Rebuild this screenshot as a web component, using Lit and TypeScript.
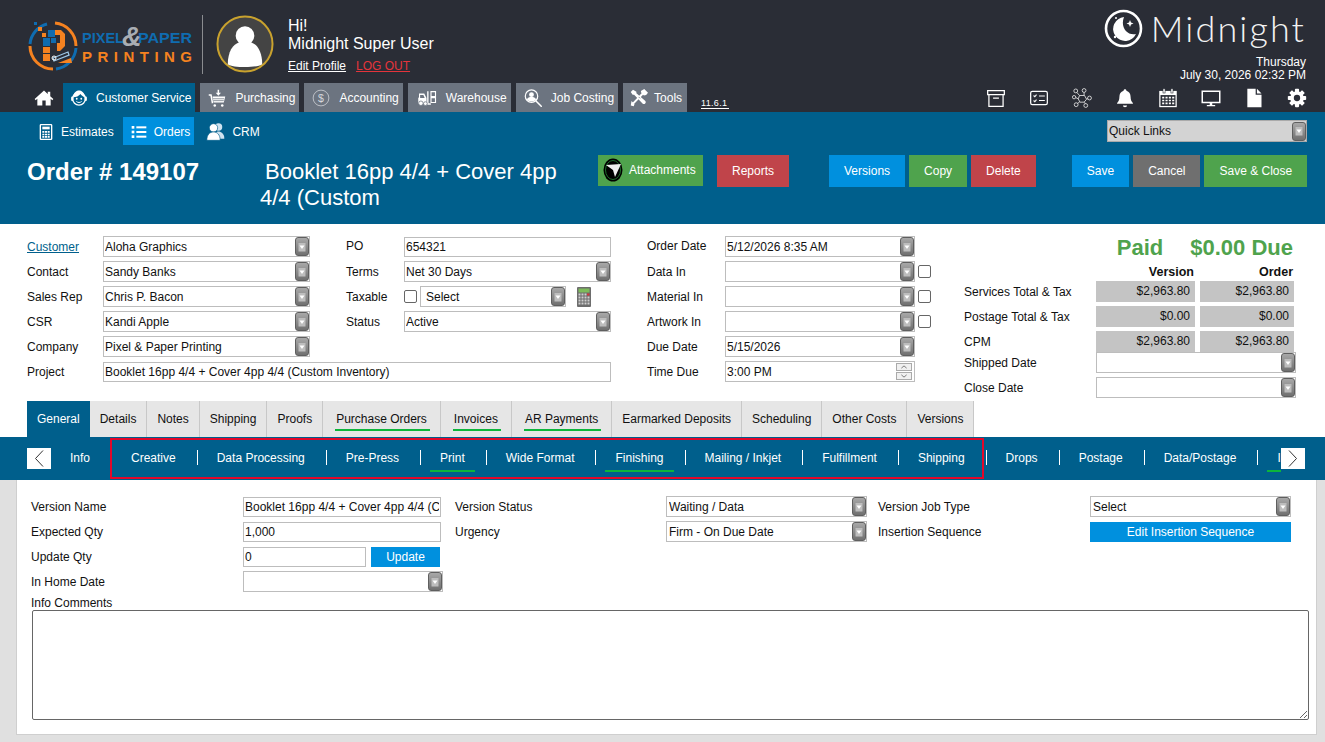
import { LitElement, html, css, svg } from "lit";
import { customElement } from "lit/decorators.js";

const I = {
  home: svg`<path fill="#fff" d="M12 3 .8 13.2l1.2 1.4L4 13v8h6v-6h4v6h6v-8l2 1.6 1.2-1.4L19.5 10V4.500h-3V7.200z"/>`,
  cs: svg`<circle cx="12" cy="13" r="8.500" fill="none" stroke="#fff" stroke-width="1.800"/><path fill="#fff" d="M4 11C5 4 9 2 12 2s7 2 8 9c-3-1-5-3-6-4.500C12 9 8 11 4 11z"/><rect x="1.500" y="10" width="3" height="6" rx="1.500" fill="#fff"/><rect x="19.500" y="10" width="3" height="6" rx="1.500" fill="#fff"/><circle cx="9" cy="13" r="1.200" fill="#fff"/><circle cx="15" cy="13" r="1.200" fill="#fff"/><path d="M8.500 16.500c2 2 5 2 7 0" stroke="#fff" stroke-width="1.300" fill="none"/>`,
  cart: svg`<path fill="none" stroke="#fff" stroke-width="2" d="M1 8h3l2 11"/><path fill="#fff" d="M6 10h17l-2 8H7.500z"/><path stroke="#6c7480" stroke-width="1" d="M6.500 13h15M7 15.500h14"/><path fill="#fff" d="M12.800 1h2v4h2.500l-3.500 4-3.500-4h2.500z"/><circle cx="9" cy="22" r="1.700" fill="#fff"/><circle cx="19" cy="22" r="1.700" fill="#fff"/>`,
  dollar: svg`<circle cx="12" cy="12" r="10.500" fill="none" stroke="#d5d8dc" stroke-width="1"/><text x="12" y="17" text-anchor="middle" font-family="Liberation Sans, sans-serif" font-size="14" fill="#d5d8dc">$</text>`,
  fork: svg`<path fill="#fff" d="M1 12l1-1V6h7l3 6v7H1z"/><path fill="#6c7480" d="M3.500 8h4.300l1.800 4H3.500z"/><path fill="none" stroke="#fff" stroke-width="1.800" d="M13.800 3v17h4"/><circle cx="4.500" cy="19" r="3" fill="#fff" stroke="#6c7480"/><circle cx="10.500" cy="19.500" r="2.500" fill="#fff" stroke="#6c7480"/><path fill="none" stroke="#fff" stroke-width="1.500" d="M18 3.500h6v6.500h-6zM18 11.500h6v6.500h-6z"/>`,
  job: svg`<circle cx="10" cy="9.500" r="8.300" fill="none" stroke="#fff" stroke-width="1.600"/><circle cx="10" cy="7.500" r="3.200" fill="#fff"/><path fill="#fff" d="M3.800 14c1-3 3.500-3.500 6.200-3.500s5.200.5 6.200 3.500c-3 3.500-9.400 3.500-12.400 0z"/><path stroke="#fff" stroke-width="2" stroke-linecap="round" d="M16 16l7 7"/>`,
  tools: svg`<path fill="#fff" d="M4 1 1 4l2.500 3.500 2 .2L17 19.500a2.500 2.500 0 0 0 3.500-3.500L8.500 5.500V3.500z"/><path fill="none" stroke="#fff" stroke-width="2.800" stroke-linecap="round" d="M19 4 5 18.500"/><path fill="#fff" d="M14.500 2.500 19 0l5 5-2.500 3-3 .5-3.500-3.500zM2 16l4 4 -1 3-4-1z"/><path stroke="#6c7480" stroke-width="1" d="M11.500 10.500l2 2"/>`,
  archive: svg`<path fill="none" stroke="#fff" stroke-width="1.500" d="M2 3h20v5H2zM3.500 8v14h17V8M8.500 12h7"/>`,
  check: svg`<rect x="2" y="4" width="20" height="16" rx="2" fill="none" stroke="#fff" stroke-width="1.500"/><path fill="none" stroke="#fff" stroke-width="1.300" d="M5.500 9l1.500 1.500L9 8M5.500 15l1.500 1.500L9 14M12 9.500h7M12 15h7"/>`,
  net: svg`<g fill="none" stroke="#e8e8e8" stroke-width="1"><path d="M9 9h6l2.500 4.500L14.500 17h-5l-2-4z"/><circle cx="4.500" cy="3.500" r="2.300"/><circle cx="14.500" cy="3" r="2.300"/><circle cx="21" cy="12" r="2.300"/><circle cx="16.500" cy="21" r="2.300"/><circle cx="5" cy="20" r="2.300"/><circle cx="2.500" cy="11" r="2"/><path d="M6 5.500 9 9M14.500 5.300 14.500 9M17.500 13h1.500M15 17l1 2M9 17l-2.500 1.500M4.500 11.500l3 1.500"/></g>`,
  bell: svg`<path fill="#fff" d="M12 1.500c1 0 1.700.7 1.700 1.700 3.500 1 5 3.800 5 7.300 0 4 1.300 6 2.800 7.500v1H2.500v-1C4 16.500 5.300 14.500 5.300 10.500c0-3.500 1.500-6.300 5-7.300C10.300 2.200 11 1.500 12 1.500zM9.500 21h5a2.500 2 0 0 1-5 0z"/>`,
  cal: svg`<rect x="1.500" y="3.500" width="21" height="19.500" fill="#fff"/><rect x="3" y="8.500" width="18" height="13" fill="#2a2d36"/><rect x="6" y="1" width="2.500" height="5" fill="#fff" stroke="#2a2d36" stroke-width=".7"/><rect x="15.500" y="1" width="2.500" height="5" fill="#fff" stroke="#2a2d36" stroke-width=".7"/><g fill="#fff"><path d="M5 10.500h2.500v2H5zM9 10.500h2.500v2H9zM13 10.500h2.500v2H13zM17 10.500h2.500v2H17zM5 14h2.500v2H5zM9 14h2.500v2H9zM13 14h2.500v2H13zM17 14h2.500v2H17zM5 17.500h2.500v2H5zM9 17.500h2.500v2H9zM13 17.500h2.500v2H13zM17 17.500h2.500v2H17z"/></g>`,
  mon: svg`<path fill="none" stroke="#fff" stroke-width="1.800" d="M1.500 4h21v13.500h-21z"/><path fill="#fff" d="M10.500 17.500h3v3h3.500v1.500H7v-1.500h3.500z"/>`,
  file: svg`<path fill="#fff" d="M4 1h10v7h7v15H4zM15.500 1 21 6.500h-5.500z"/>`,
  gear: svg`<g fill="#fff"><circle cx="12" cy="12" r="8.200"/><rect x="9.500" y="1" width="5" height="22" rx="1"/><rect x="9.500" y="1" width="5" height="22" rx="1" transform="rotate(45 12 12)"/><rect x="9.500" y="1" width="5" height="22" rx="1" transform="rotate(90 12 12)"/><rect x="9.500" y="1" width="5" height="22" rx="1" transform="rotate(135 12 12)"/></g><circle cx="12" cy="12" r="3.800" fill="#2a2d36"/>`,
  est: svg`<rect x="3.500" y="1" width="17" height="22" rx="1" fill="none" stroke="#fff" stroke-width="2"/><rect x="6.500" y="4" width="11" height="4" fill="#fff"/><g fill="#fff"><path d="M6.500 10.500h3v2.500h-3zM10.500 10.500h3v2.500h-3zM14.500 10.500h3v2.500h-3zM6.500 14.500h3v2.500h-3zM10.500 14.500h3v2.500h-3zM14.500 14.500h3v2.500h-3zM6.500 18h3v2.500h-3zM10.500 18h3v2.500h-3zM14.500 18h3v2.500h-3z"/></g>`,
  list: svg`<g fill="#fff"><rect x="1" y="3" width="4" height="4"/><rect x="1" y="10" width="4" height="4"/><rect x="1" y="17" width="4" height="4"/><rect x="8" y="3.500" width="15" height="3"/><rect x="8" y="10.500" width="15" height="3"/><rect x="8" y="17.500" width="15" height="3"/></g>`,
  crm: svg`<circle cx="15" cy="6" r="4.500" fill="#cfe3f0"/><path fill="#cfe3f0" d="M9 20c0-6 3-8.500 6-8.500s7 2.500 7 8.500z"/><circle cx="9" cy="7" r="5" fill="#fff" stroke="#005f8c" stroke-width=".8"/><path fill="#fff" stroke="#005f8c" stroke-width=".8" d="M1 22c0-7 3.500-10 8-10s8 3 8 10z"/>`,
};
const icon = (k: keyof typeof I, cls = "") => html`<svg class="ic ${cls}" viewBox="0 0 24 24" aria-hidden="true">${I[k]}</svg>`;
const arrow = html`<span class="arr"><svg viewBox="0 0 12 18" width="12" height="18"><rect x="2.500" y="5" width="7" height="8.500" fill="#bdbdbd"/><path d="M3.500 7.500h5L6 11z" fill="#fff"/></svg></span>`;
const sel = (t = "", cls = "") => html`<div class="fld sel ${cls}"><span class="v">${t}</span>${arrow}</div>`;
const inp = (v: string, cls = "") => html`<input class="fld in ${cls}" .value=${v} />`;
const cb = html`<input type="checkbox" class="cb" />`;

@customElement("app-root")
export class AppRoot extends LitElement {
  static styles = css`
    :host { display: flex; flex-direction: column; width: 100%; min-height: 100vh; font: 12px/14px "Liberation Sans", Arial, sans-serif; color: #111; background: #fff; overflow: hidden; }
    * { box-sizing: border-box; }
    .ic { display: block; flex: none; width: 18px; height: 18px; }
    a { color: inherit; }

    /* header */
    .hdr { background: #2a2d36; height: 112px; color: #fff; flex: none; }
    .top { display: flex; height: 83px; }
    .logo { display: block; width: 180px; height: 70px; margin: 10px 0 0 20px; flex: none; }
    .divider { width: 1px; height: 59px; background: #8a8c90; margin: 15px 0 0 2px; }
    .avatar { display: block; width: 58px; height: 58px; margin: 15px 0 0 13px; flex: none; }
    .hi { margin: 17px 0 0 14px; font-size: 16px; line-height: 18px; }
    .links { display: flex; gap: 10px; font-size: 12px; line-height: 14px; margin-top: 6px; }
    .links .lo { color: #e5343b; }
    .brand { margin-left: auto; padding: 9px 19px 0 0; display: flex; flex-direction: column; align-items: flex-end; }
    .mid { display: flex; align-items: center; gap: 8px; height: 38px; }
    .mid svg { width: 39px; height: 39px; display: block; }
    .mid span { font: 300 36px/38px Lato, "Open Sans", sans-serif; letter-spacing: 2.100px; color: #f2f2f2; }
    .date { text-align: right; line-height: 13px; margin-top: 9px; }
    .nav { display: flex; height: 29px; padding-left: 34px; align-items: stretch; }
    .home { width: 20px; height: 20px; margin: 5px 9px 0 0; }
    .tab { display: flex; align-items: center; gap: 9px; padding: 1px 4px 0 8px; margin-right: 5px; background: #6c7480; color: #fff; }
    .tab.on { background: #005f8c; gap: 8px; padding-left: 7px; }
    .tab .w { width: 21px; }
    .tab.n { gap: 6px; padding: 1px 5px 0 7px; }
    .ver { align-self: flex-end; font-size: 9px; line-height: 10px; margin: 0 0 3px 9px; border-bottom: 1px solid #fff; letter-spacing: .300px; padding-right: 2px; }
    .icons { margin-left: auto; display: flex; gap: 23px; align-items: center; padding: 0 18px 0 0; }
    .icons .ic { width: 20px; height: 20px; margin-top: 1px; }

    /* blue head */
    .blue { background: #005f8c; height: 112px; flex: none; color: #fff; }
    .sub { display: flex; height: 43px; padding: 5px 18px 0 36px; align-items: flex-start; }
    .sub-i { display: flex; align-items: center; gap: 7px; height: 28px; padding: 1px 0 0 2px; }
    .sub-i .ic { width: 16px; height: 16px; }
    .sub-i.on { background: #0090de; margin: 0 12px 0 9px; padding: 1px 4px 0 8px; }
    .sub-i.crm { gap: 6px; padding-left: 0; }
    .sub-i.crm .ic { width: 20px; height: 20px; }
    .titlerow { display: flex; padding-left: 27px; align-items: flex-start; }
    .ono { font-size: 24px; line-height: 34px; font-weight: 700; width: 233px; flex: none; }
    .bk { font-size: 22px; line-height: 26px; width: 310px; margin: 4px 28px 0 0; text-indent: 5px; flex: none; }
    .btn { display: flex; align-items: center; height: 32px; padding: 0 15px; color: #fff; border: 0; font: inherit; flex: none; }
    .g { background: #4fa34d; } .r { background: #c0444a; } .bl { background: #0090de; } .gr { background: #6f6f6f; }
    .att { height: 31px; padding: 0 0 2px 5px; gap: 6px; width: 105px; margin-right: 14px; }
    .att svg { width: 20px; height: 24px; display: block; }
    .m40 { margin-left: 40px; } .m36 { margin-left: 36px; } .ml4 { margin-left: 4px; }

    /* form */
    .form { display: flex; height: 177px; padding: 10px 0 0 27px; flex: none; }
    .grid { display: grid; grid-template-columns: 76px 207px 94px 207px 114px 190px 16px; grid-auto-rows: 25px; align-items: center; align-self: flex-start; }
    .lab2 { padding-left: 36px; }
    .lab3 { padding-left: 36px; }
    .up { margin-bottom: 2px; }
    .cust { color: #005f8c; text-decoration: underline; }
    .fld { display: flex; align-items: center; height: 21px; width: 100%; background: #fff; border: 1px solid #bdbdbd; font: inherit; color: #111; padding: 0 0 0 1px; border-radius: 0; outline: none; }
    .in { height: 20px; padding: 0 1px; }
    .sel .v { flex: 1; white-space: nowrap; overflow: hidden; }
    .sel.ql { margin: 3px 0 0 auto; width: 200px; height: 22px; background: #d3d3d3; border-color: #aaa; }
    .arr { flex: none; width: 14px; height: 19px; border: 1px solid #5f5f5f; border-radius: 3px; background: linear-gradient(#a8a8a8, #707070); display: flex; align-items: center; justify-content: center; }
    .cb { width: 13px; height: 13px; margin: 0 0 0 3px; appearance: none; background: #fff; border: 1px solid #666; border-radius: 2px; display: block; }
    .fld.span4 { grid-column: 2 / span 3; width: 508px; }
    .tax { display: flex; align-items: center; }
    .tax .cb { margin: 0 3px 0 0; }
    .tax .sel { width: 146px; padding-left: 5px; }
    .tax > svg { width: 16px; height: 20px; margin-left: 10px; display: block; flex: none; }
    .time { display: flex; align-items: center; height: 21px; border: 1px solid #bdbdbd; padding: 0 1px 0 1px; }
    .time span { flex: 1; }
    .steps { display: flex; flex-direction: column; gap: 1px; margin-right: 1px; }
    .steps svg { display: block; width: 16px; height: 8px; background: #f0f0f0; border: 1px solid #aaa; }
    .tot { margin-left: 33px; display: grid; grid-template-columns: 127px 99px 94px; column-gap: 5px; grid-template-rows: 28px 17px 25px 25px 21px 25px 25px; padding-top: 2px; width: 340px; align-self: flex-start; }
    .paid { grid-column: 1 / -1; display: flex; justify-content: flex-end; gap: 27px; padding-right: 1px; font-size: 22px; line-height: 24px; font-weight: 700; color: #4fa34d; }
    .th { font-weight: 700; font-size: 12.500px; line-height: 15px; text-align: right; padding: 1px 1px 0 0; }
    .c { height: 21px; line-height: 21px; background: #c4c4c4; text-align: right; padding-right: 5px; }
    .l { line-height: 22px; }
    .tot .fld { width: 200px; grid-column: 2 / -1; }

    /* tabs */
    .tabs { display: flex; height: 36px; padding-left: 27px; flex: none; }
    .t { position: relative; display: flex; align-items: center; padding: 0 10px; background: #e6e6e6; border-right: 1px solid #c8c8c8; }
    .t.on { background: #005f8c; color: #fff; padding: 0 10px; border-right: 0; }
    .t.u { padding: 0 13px; }
    .t.u::after { content: ""; position: absolute; left: 12px; right: 10px; bottom: 6px; height: 2px; background: #0db53b; }

    /* sub nav */
    .snav { position: relative; display: flex; height: 43px; background: #005f8c; color: #fff; align-items: center; padding: 0 20px 0 27px; flex: none; }
    .abox { display: flex; align-items: center; justify-content: center; width: 24px; height: 21px; background: #fff; flex: none; margin-top: -1px; }
    .abox svg { width: 12px; height: 19px; display: block; }
    .scr { display: flex; flex: 1; min-width: 0; overflow: hidden; height: 100%; align-items: center; margin-left: -1px; }
    .it { position: relative; display: flex; align-items: center; height: 100%; padding: 0 21px 2px 20px; white-space: nowrap; flex: none; }
    .it.sep::before { content: ""; position: absolute; left: 0; top: 13px; height: 15px; width: 1px; background: #fff; }
    .it.u::after { content: ""; position: absolute; left: 10px; right: 11px; bottom: 8px; height: 2px; background: #0db53b; }
    .rbox { position: absolute; left: 110px; top: 1px; width: 874px; height: 41px; border: 2px solid #e3082a; pointer-events: none; }

    /* content */
    .content { flex: 1; background: #e0e0e0; padding: 0 8px 7px 16px; display: flex; }
    .panel { flex: 1; height: 255px; background: #fff; border: 1px solid #cfcfcf; border-top: 0; padding: 14px 0 0 14px; }
    .vgrid { display: grid; grid-template-columns: 212px 212px 211px 212px 212px 201px; grid-auto-rows: 25px; align-items: center; }
    .w198 { width: 198px; } .fld.w200 { width: 200px; } .fld.w201 { width: 201px; padding-left: 2px; }
    .qty { display: flex; align-items: center; gap: 5px; }
    .qty .in { width: 123px; }
    .upd { height: 20px; width: 69px; justify-content: center; padding: 0; }
    .ins { height: 20px; width: 201px; justify-content: center; padding: 0; }
    .cm { margin-top: 2px; }
    textarea { display: block; width: 1277px; height: 110px; margin: 0 0 0 1px; border: 1px solid #666; border-radius: 2px; background: #fff; font: inherit; outline: none; }
  `;

  render() {
    const tabs: [string, string][] = [["General", "on"], ["Details", ""], ["Notes", ""], ["Shipping", ""], ["Proofs", ""], ["Purchase Orders", "u"], ["Invoices", "u"], ["AR Payments", "u"], ["Earmarked Deposits", ""], ["Scheduling", ""], ["Other Costs", ""], ["Versions", ""]];
    const subs: [string, boolean][] = [["Info", false], ["Creative", false], ["Data Processing", false], ["Pre-Press", false], ["Print", true], ["Wide Format", false], ["Finishing", true], ["Mailing / Inkjet", false], ["Fulfillment", false], ["Shipping", false], ["Drops", false], ["Postage", false], ["Data/Postage", false], ["Invoicing", true]];
    return html`
      <header class="hdr">
        <div class="top">
          <svg class="logo" viewBox="0 0 180 70" role="img" aria-label="Pixel and Paper Printing">
            <g fill="none" stroke-width="3">
              <path stroke="#f58220" d="M35 13.100A23 23 0 0 1 56 36"/>
              <path stroke="#0f6cb0" d="M56 38A23 23 0 0 1 36 59"/>
              <path stroke="#f58220" d="M33 59A23 23 0 0 1 10 36"/>
              <path stroke="#0f6cb0" d="M10 34A23 23 0 0 1 27 14"/>
            </g>
            <g fill="#f58220"><rect x="18" y="17" width="4" height="4"/><rect x="22" y="23" width="4" height="4"/><rect x="23" y="37" width="7" height="6"/><rect x="23" y="44" width="7" height="7"/><path d="M33 20h8l4 4v12l-5 5h-3v-8h3v-8h-7z"/></g>
            <g fill="#0f6cb0"><rect x="14" y="12" width="3" height="3"/><rect x="28" y="20" width="7" height="7"/><rect x="23" y="28" width="7" height="8"/><rect x="31" y="28" width="5" height="5"/></g>
            <path d="M33 48l15-6 1 3-15 6z" fill="none" stroke="#9cc6e6" stroke-width="1.300"/><circle cx="34" cy="48" r="2" fill="none" stroke="#fff"/>
            <path d="M38 53l13-5 1 5z" fill="#f58220"/>
            <g font-family="Liberation Sans, sans-serif" font-weight="700">
              <text x="62" y="33" font-size="15.500" fill="#0f6cb0" textLength="42" lengthAdjust="spacingAndGlyphs">PIXEL</text>
              <text x="118" y="33" font-size="15.500" fill="#0f6cb0" textLength="54" lengthAdjust="spacingAndGlyphs">PAPER</text>
              <text x="102" y="36" font-style="italic" font-size="27" fill="#a9adb3">&amp;</text>
              <text x="62" y="52" font-size="15" fill="#f58220" textLength="110">PRINTING</text>
            </g>
          </svg>
          <div class="divider"></div>
          <svg class="avatar" viewBox="0 0 59 59" aria-hidden="true">
            <circle cx="29.500" cy="29.500" r="28" fill="#444" stroke="#c9a22e" stroke-width="2"/>
            <circle cx="29.500" cy="21" r="9.500" fill="#fff"/>
            <path fill="#fff" d="M12 50c0-12 5-21 12-22h11c7 1 12 10 12 22-5 4-30 4-35 0z"/>
          </svg>
          <div class="hi">
            <div>Hi!</div>
            <div>Midnight Super User</div>
            <div class="links"><a href="#">Edit Profile</a><a href="#" class="lo">LOG OUT</a></div>
          </div>
          <div class="brand">
            <div class="mid">
              <svg viewBox="0 0 39 39" aria-hidden="true">
                <circle cx="19.500" cy="19.500" r="17.500" fill="none" stroke="#fff" stroke-width="2.600"/>
                <path fill="#fff" d="M20 8a12 12 0 1 0 12 17c-9 2-16-7-12-17z"/>
                <path fill="#fff" d="M26 11l1 2.500 2.500 1-2.500 1-1 2.500-1-2.500-2.500-1 2.500-1z"/>
                <circle cx="12" cy="9" r="1" fill="#fff"/><circle cx="11" cy="28" r="1.200" fill="#fff"/>
              </svg>
              <span>Midnight</span>
            </div>
            <div class="date">Thursday<br />July 30, 2026 02:32 PM</div>
          </div>
        </div>
        <nav class="nav">
          ${icon("home", "home")}
          <div class="tab on">${icon("cs")}<span>Customer Service</span></div>
          <div class="tab">${icon("cart")}<span>Purchasing</span></div>
          <div class="tab">${icon("dollar")}<span>Accounting</span></div>
          <div class="tab">${icon("fork", "w")}<span>Warehouse</span></div>
          <div class="tab">${icon("job")}<span>Job Costing</span></div>
          <div class="tab n">${icon("tools")}<span>Tools</span></div>
          <span class="ver">11.6.1</span>
          <div class="icons">${(["archive", "check", "net", "bell", "cal", "mon", "file", "gear"] as const).map((k) => icon(k))}</div>
        </nav>
      </header>

      <section class="blue">
        <div class="sub">
          <div class="sub-i">${icon("est")}<span>Estimates</span></div>
          <div class="sub-i on">${icon("list")}<span>Orders</span></div>
          <div class="sub-i crm">${icon("crm")}<span>CRM</span></div>
          ${sel("Quick Links", "ql")}
        </div>
        <div class="titlerow">
          <div class="ono">Order # 149107</div>
          <div class="bk">Booklet 16pp 4/4 + Cover 4pp 4/4 (Custom</div>
          <div class="btn g att">
            <svg viewBox="0 0 20 24" aria-hidden="true"><ellipse cx="10" cy="12" rx="9.500" ry="11.500" fill="#000"/><ellipse cx="10" cy="12" rx="7.500" ry="9.500" fill="none" stroke="#1d6b2a" stroke-width="1"/><path d="M3 7l15-1-6 13-2-7z" fill="#eee"/></svg>
            <span>Attachments</span>
          </div>
          <div class="btn r">Reports</div>
          <div class="btn bl m40">Versions</div>
          <div class="btn g ml4">Copy</div>
          <div class="btn r ml4">Delete</div>
          <div class="btn bl m36">Save</div>
          <div class="btn gr ml4">Cancel</div>
          <div class="btn g ml4">Save &amp; Close</div>
        </div>
      </section>

      <section class="form">
        <div class="grid">
          <a href="#" class="cust">Customer</a>${sel("Aloha Graphics")}
          <span class="lab2 up">PO</span>${inp("654321")}
          <span class="lab3 up">Order Date</span>${sel("5/12/2026 8:35 AM")}<span></span>

          <span>Contact</span>${sel("Sandy Banks")}
          <span class="lab2">Terms</span>${sel("Net 30 Days")}
          <span class="lab3">Data In</span>${sel()}${cb}

          <span>Sales Rep</span>${sel("Chris P. Bacon")}
          <span class="lab2">Taxable</span>
          <div class="tax">${cb}${sel("Select")}
            <svg viewBox="0 0 16 20" aria-hidden="true"><rect x="1" y="0" width="14" height="20" rx="1" fill="#6d6d6d"/><rect x="2.500" y="1.500" width="11" height="4" fill="#7dbb5a"/><rect x="11" y="6.500" width="2.500" height="2" fill="#d4343b"/><g fill="#cfcfcf"><path d="M2.500 6.500h2v2h-2zM5.500 6.500h2v2h-2zM8.500 6.500h2v2h-2zM2.500 9.500h2v2h-2zM5.500 9.500h2v2h-2zM8.500 9.500h2v2h-2zM11.500 9.500h2v2h-2zM2.500 12.500h2v2h-2zM5.500 12.500h2v2h-2zM8.500 12.500h2v2h-2zM11.500 12.500h2v2h-2zM2.500 15.500h2v2h-2zM5.500 15.500h2v2h-2zM8.500 15.500h2v2h-2zM11.500 15.500h2v2h-2z"/></g></svg>
          </div>
          <span class="lab3">Material In</span>${sel()}${cb}

          <span>CSR</span>${sel("Kandi Apple")}
          <span class="lab2">Status</span>${sel("Active")}
          <span class="lab3">Artwork In</span>${sel()}${cb}

          <span>Company</span>${sel("Pixel & Paper Printing")}
          <span></span><span></span>
          <span class="lab3">Due Date</span>${sel("5/15/2026")}<span></span>

          <span>Project</span>${inp("Booklet 16pp 4/4 + Cover 4pp 4/4 (Custom Inventory)", "span4")}
          <span class="lab3">Time Due</span>
          <div class="time"><span>3:00 PM</span>
            <div class="steps">
              <svg viewBox="0 0 16 8"><path d="M4.500 5.500 8 2.500l3.500 3" fill="none" stroke="#555"/></svg>
              <svg viewBox="0 0 16 8"><path d="M4.500 2.500 8 5.500l3.500-3" fill="none" stroke="#555"/></svg>
            </div>
          </div><span></span>
        </div>

        <div class="tot">
          <div class="paid"><span>Paid</span><span>$0.00 Due</span></div>
          <span></span><div class="th">Version</div><div class="th">Order</div>
          <span class="l">Services Total &amp; Tax</span><div class="c">$2,963.80</div><div class="c">$2,963.80</div>
          <span class="l">Postage Total &amp; Tax</span><div class="c">$0.00</div><div class="c">$0.00</div>
          <span class="l">CPM</span><div class="c">$2,963.80</div><div class="c">$2,963.80</div>
          <span class="l">Shipped Date</span>${sel()}
          <span class="l">Close Date</span>${sel()}
        </div>
      </section>

      <div class="tabs">${tabs.map(([t, c]) => html`<div class="t ${c}">${t}</div>`)}</div>

      <div class="snav">
        <div class="abox"><svg viewBox="0 0 12 19"><path d="M10 1.500 2.500 9.500l7.500 8" fill="none" stroke="#333"/></svg></div>
        <div class="scr">
          ${subs.map(([t, u], i) => html`<div class="it ${i > 1 ? "sep" : ""} ${u ? "u" : ""}"><span>${t}</span></div>`)}
        </div>
        <div class="abox"><svg viewBox="0 0 12 19"><path d="M2 1.500l7.500 8-7.500 8" fill="none" stroke="#333"/></svg></div>
        <div class="rbox"></div>
      </div>

      <div class="content">
        <main class="panel">
          <div class="vgrid">
            <span>Version Name</span>${inp("Booklet 16pp 4/4 + Cover 4pp 4/4 (Custom Inventory)", "w198")}
            <span>Version Status</span>${sel("Waiting / Data", "w201")}
            <span>Version Job Type</span>${sel("Select", "w201")}

            <span>Expected Qty</span>${inp("1,000", "w198")}
            <span>Urgency</span>${sel("Firm - On Due Date", "w201")}
            <span>Insertion Sequence</span><div class="btn bl ins">Edit Insertion Sequence</div>

            <span>Update Qty</span>
            <div class="qty">${inp("0")}<div class="btn bl upd">Update</div></div>
            <span></span><span></span><span></span><span></span>

            <span>In Home Date</span>${sel("", "w200")}
          </div>
          <div class="cm">Info Comments</div>
          <textarea></textarea>
        </main>
      </div>
    `;
  }
}
